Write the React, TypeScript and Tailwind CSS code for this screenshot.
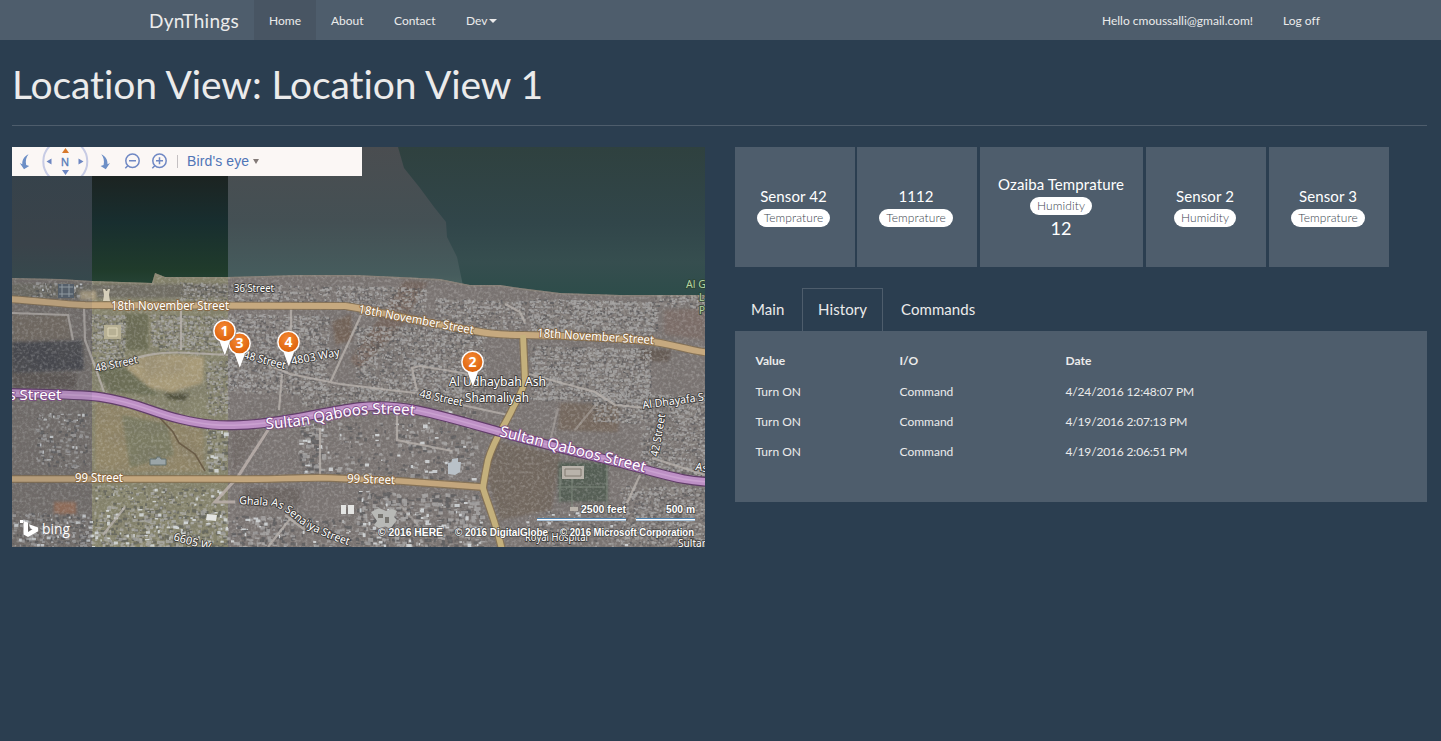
import React from "react";

const FONT = "font-[Lato,sans-serif] [font-variant-ligatures:none]";

/* ---------- Aerial map ---------- */

function createRandom(seed: number) {
  let s = seed;
  return () => {
    s = (s * 1664525 + 1013904223) % 4294967296;
    return s / 4294967296;
  };
}

type Block = [x: number, y: number, w: number, h: number, count: number, size: number];

function specks(blocks: Block[], seed: number) {
  const rnd = createRandom(seed);
  let d = "";
  for (const [x, y, w, h, count, size] of blocks) {
    for (let i = 0; i < count; i++) {
      const px = x + rnd() * w;
      const py = y + Math.floor((rnd() * h) / 5) * 5 + rnd() * 3.8 + (px - x) * 0.03;
      const bw = 1 + rnd() * size;
      const bh = 1 + rnd() * size * 0.7;
      d += `M${px.toFixed(1)} ${py.toFixed(1)}h${bw.toFixed(1)}v${bh.toFixed(1)}h-${bw.toFixed(1)}z`;
    }
  }
  return d;
}

const housing: Block[] = [
  [90, 314, 34, 46, 170, 2],
  [150, 314, 78, 36, 330, 2],
  [180, 282, 150, 20, 230, 2.2],
  [228, 313, 100, 78, 850, 2],
  [335, 285, 90, 23, 220, 2],
  [355, 325, 130, 73, 950, 2],
  [435, 298, 90, 34, 280, 2],
  [528, 298, 128, 32, 650, 2],
  [530, 345, 120, 55, 950, 2],
  [592, 392, 113, 30, 380, 2],
  [640, 425, 65, 48, 300, 2],
  [620, 485, 85, 60, 450, 2],
  [206, 360, 22, 55, 100, 2],
  [300, 385, 100, 22, 150, 2.2],
  [655, 292, 50, 13, 70, 2.2],
];
const industry: Block[] = [
  [36, 412, 50, 55, 80, 3],
  [12, 512, 80, 34, 130, 3],
  [94, 484, 130, 22, 80, 3],
  [94, 506, 134, 40, 270, 3.5],
  [230, 515, 120, 32, 110, 4],
  [298, 422, 25, 50, 50, 4.5],
  [325, 420, 65, 52, 40, 3.5],
  [395, 408, 80, 69, 100, 4],
  [355, 490, 125, 55, 230, 4.5],
  [205, 425, 20, 45, 40, 4],
  [525, 510, 100, 35, 80, 2.5],
  [30, 282, 50, 16, 35, 2.5],
];

const PALE = specks(housing, 11) + specks(industry, 71);
const DARK = specks(housing, 29) + specks(industry, 37);
const WARM = specks(housing, 53);
const BRIGHT = specks(
  industry.map(([x, y, w, h, c, s]) => [x, y, w, h, Math.round(c / 5), s] as Block),
  97,
);

const COAST =
  "M12 278L60 279L92 281L152 283L155 273L165 277L228 277L300 275L355 275L400 277L440 279L470 285L500 285L520 288L560 293L620 295L705 295";

const highwayPath =
  "M8 393C40 394 75 394 100 397C140 403 150 412 180 419C205 425 220 426 240 425C280 424 320 412 360 407C400 403 430 412 500 432C560 449 620 462 650 471C680 479 690 481 710 482";
const northRoad = "M8 299C40 301 60 304 85 305L345 306C362 308 400 318 475 331C490 334 505 335 524 335C570 336 610 337 645 341C670 343 685 350 710 353";
const southRoad = "M8 479L230 479C270 480 300 477 330 478L400 481L482 487";
const linkRoad = "M523 335L525 380C522 395 516 400 511 412C503 428 494 440 488 460C486 470 484 480 483 488C488 505 496 522 502 550";

function MapLabel({
  x, y, size, width, rotate = 0, tone = "dark", children,
}: {
  x: number; y: number; size: number; width: number; rotate?: number;
  tone?: "dark" | "brown" | "purple" | "green"; children: string;
}) {
  const halo = { dark: "#33312f", brown: "#85643d", purple: "#7d4788", green: "#2d4430" }[tone];
  return (
    <text
      x={x}
      y={y}
      transform={`rotate(${rotate} ${x} ${y})`}
      textLength={width}
      lengthAdjust="spacingAndGlyphs"
      fontSize={size}
      fill={tone === "green" ? "#b4d3a2" : "#ffffff"}
      stroke={halo}
      strokeWidth={2}
      strokeOpacity={0.8}
      strokeLinejoin="round"
      paintOrder="stroke"
      className="font-['Noto_Sans',sans-serif]"
    >
      {children}
    </text>
  );
}

function CurvedLabel({ id, d, size, width, tone = "#33312f", children }: { id: string; d: string; size: number; width: number; tone?: string; children: string }) {
  return (
    <>
      <path id={id} d={d} fill="none" />
      <text fontSize={size} fill="#fff" stroke={tone} strokeWidth={2} strokeOpacity={0.8} strokeLinejoin="round" paintOrder="stroke" className="font-['Noto_Sans',sans-serif]">
        <textPath href={`#${id}`} textLength={width} lengthAdjust="spacingAndGlyphs">{children}</textPath>
      </text>
    </>
  );
}

function Marker({ x, y, label }: { x: number; y: number; label: string }) {
  return (
    <g transform={`translate(${x} ${y})`}>
      <path d="M-5.5 9L0.3 25L6 9Z" fill="#fff" stroke="#6d625a" strokeWidth={0.5} />
      <circle r={11.8} fill="#fff" stroke="#6d625a" strokeWidth={0.6} />
      <circle r={9.9} fill="url(#pin)" />
      <path d="M-4.8 10L0.3 23.5L5.4 10Z" fill="#fff" />
      <text y={4.8} textAnchor="middle" fontSize={14} fontWeight={700} fill="#fff" className="font-['Open_Sans',sans-serif]">{label}</text>
    </g>
  );
}

function AerialMap() {
  return (
    <svg viewBox="12 147 693 400" width={693} height={400} className="block">
      <defs>
        <linearGradient id="seaLeft" x1="0" y1="0" x2="0" y2="1">
          <stop offset="0" stopColor="#35424b" /><stop offset="0.65" stopColor="#3a434a" /><stop offset="1" stopColor="#344b4e" />
        </linearGradient>
        <linearGradient id="seaMid" x1="0" y1="0" x2="0" y2="1">
          <stop offset="0" stopColor="#1c2422" /><stop offset="0.2" stopColor="#1c2422" /><stop offset="0.5" stopColor="#182e2f" /><stop offset="0.82" stopColor="#203b2b" /><stop offset="1" stopColor="#2a4a3e" />
        </linearGradient>
        <linearGradient id="seaHaze" x1="0" y1="0" x2="0" y2="1">
          <stop offset="0" stopColor="#4a4d50" /><stop offset="0.5" stopColor="#445054" /><stop offset="0.85" stopColor="#465c5d" /><stop offset="1" stopColor="#516863" />
        </linearGradient>
        <linearGradient id="seaDeep" x1="0" y1="0" x2="0" y2="1">
          <stop offset="0" stopColor="#2f413f" /><stop offset="0.5" stopColor="#31464a" /><stop offset="0.75" stopColor="#364e4f" /><stop offset="1" stopColor="#2c4c49" />
        </linearGradient>
        <radialGradient id="pin" cx="0.45" cy="0.35" r="0.75">
          <stop offset="0" stopColor="#f58a35" /><stop offset="1" stopColor="#d95c05" />
        </radialGradient>
        <filter id="soil" x="0" y="0" width="100%" height="100%">
          <feTurbulence type="fractalNoise" baseFrequency="0.035 0.045" numOctaves={5} seed={8} />
          <feColorMatrix values="0 0 0 0 0.15  0 0 0 0 0.14  0 0 0 0 0.13  1.8 0 0 0 -0.7" />
        </filter>
        <filter id="grain" x="0" y="0" width="100%" height="100%">
          <feTurbulence type="fractalNoise" baseFrequency="0.35" numOctaves={2} seed={4} />
          <feColorMatrix values="0 0 0 0 0.84  0 0 0 0 0.84  0 0 0 0 0.83  0 1.5 0 0 -0.64" />
        </filter>
        <clipPath id="land"><path d={`${COAST}V547H12Z`} /></clipPath>
        <filter id="soft"><feGaussianBlur stdDeviation="0.45" /></filter>
        <filter id="blend"><feGaussianBlur stdDeviation="1.8" /></filter>
      </defs>

      {/* water */}
      <rect x={12} y={147} width={80} height={150} fill="url(#seaLeft)" />
      <rect x={92} y={147} width={136} height={150} fill="url(#seaMid)" />
      <rect x={228} y={147} width={477} height={150} fill="url(#seaHaze)" />
      <path d="M398 147L404 168L420 188L434 207L446 222L447 237L457 257L466 300H705V147Z" fill="url(#seaDeep)" />

      {/* land */}
      <g clipPath="url(#land)">
        <rect x={12} y={270} width={80} height={277} fill="#76706b" />
        <rect x={92} y={270} width={136} height={277} fill="#86846c" />
        <rect x={228} y={270} width={477} height={277} fill="#7b7573" />
        <g filter="url(#blend)">
          <path d="M12 342L82 340L84 370L12 373Z" fill="#494a4e" />
          <path d="M12 315L68 314L72 340L12 341Z" fill="#746c62" />
          <path d="M12 373H76V388H12Z" fill="#5e5953" />
          <path d="M124 314H148V350H126Z" fill="#6c6d55" />
          <path d="M122 362C140 353 180 353 204 357L203 383L172 392L142 386Z" fill="#a79a78" />
          <path d="M95 402L150 410L204 430V472H95Z" fill="#918668" />
          <path d="M122 415L168 424L174 455L130 468Z" fill="#7c7c63" />
          <path d="M94 370L125 367L160 396L110 392Z" fill="#6c6e57" />
          <path d="M332 322L351 314L352 340L336 345Z" fill="#736359" />
          <path d="M405 280L428 282L400 328L360 370L350 360Z" fill="#75665f" />
          <path d="M232 430L264 430L235 472H232Z" fill="#736c69" />
          <path d="M245 488H300V506L245 500Z" fill="#6d6664" />
          <path d="M492 440L560 455L552 510L500 520L488 480Z" fill="#72675f" />
          <path d="M560 403L620 405L618 432L558 430Z" fill="#76695e" />
          <path d="M558 462H608V502H558Z" fill="#545e55" />
          <path d="M664 310L705 308V340L664 335Z" fill="#7b6e69" />
          <path d="M640 348L672 350L668 362L640 360Z" fill="#665b54" />
          <path d="M54 502H76V514H54Z" fill="#97705a" />
          <path d="M164 393L190 394L184 401L168 399Z" fill="#504f3a" />
          <path d="M12 284H228V298H12Z" fill="#706d63" />
          <path d="M80 291H96V300H80Z" fill="#a99c80" />
        </g>
        <rect x={12} y={270} width={693} height={277} filter="url(#soil)" opacity={0.22} />
        <rect x={12} y={270} width={693} height={277} filter="url(#grain)" opacity={0.4} />
        <g filter="url(#soft)">
          <path d={DARK} fill="#484a4d" opacity={0.45} />
          <path d={WARM} fill="#928d88" opacity={0.6} />
          <path d={PALE} fill="#b4b5b5" opacity={0.62} />
          <path d={BRIGHT} fill="#dde2e5" opacity={0.8} />
          <rect x={104} y={325} width={17} height={14} fill="#b7b094" />
          <path d="M108 328h9v8h-9z" fill="none" stroke="#ded6b9" />
          <rect x={58} y={284} width={16} height={14} fill="#59636c" />
          <path d="M59 287h14M59 294h14M62 284v13M69 284v13" stroke="#9ba5aa" fill="none" />
          <path d="M103 289h2l1 2h1l1-2h2l-1 6 1 6h-7l1-6z" fill="#d6cfba" />
          <path d="M150 459h6l1-2h3l1 2h5v6h-16z" fill="#9ba5a8" stroke="#65706e" />
          <path d="M562 466h22v13h-22z" fill="#b9b3ab" />
          <path d="M565 469h16v7h-16z" fill="none" stroke="#817a70" />
          <path d="M572 479V508M558 487H605M607 465V515M560 470V502" stroke="#7d867b" fill="none" />
          <path d="M570 507h8v4h-8z" fill="#b9b3ab" />
          <path d="M448 463l4-1v-3l6-1v4h3l-1 10-5 3-7-1z" fill="#b9c1c8" />
          <path d="M371 512l8-4 7 3 6-2 5 2-3 6 3 3-7 9-5-3-5 3-6-4 3-4z" fill="#b8b9b6" />
          <path d="M378 514h5v4h-5zM385 517h4v6h-4z" fill="#77746f" />
          <path d="M207 514l10 1-1 6-10-1zM341 505h5v9h-5zM348 505h6v9h-6z" fill="#e4e5e3" />
        </g>
        {/* shoreline and local streets */}
        <path d={COAST} fill="none" stroke="#948b7d" strokeWidth={3} opacity={0.5} />
        <g fill="none" stroke="#b8b2ad" strokeWidth={2.2} opacity={0.8}>
          <path d="M84 306L85 340L97 372L104 392M12 313L68 315L73 340M96 370C130 360 150 350 190 353L228 355M181 308V350" />
          <path d="M291 307V345M282 374L279 410M262 362L290 374L340 384L415 393M361 315L330 383" />
          <path d="M125 507L103 535M293 515L268 547M285 515L305 530" />
          <path d="M417 391L412 368L420 366L475 375M425 397L508 415M529 374L595 392L615 405L645 408M525 323L520 312L505 304" />
          <path d="M397 412V440L452 451M652 458L705 475M320 428V476M640 475L627 503" />
          <path d="M558 408L548 450M598 402L575 430M400 505L425 533" opacity={0.6} />
        </g>
        <path d="M268 430L237 478L215 502H235" fill="none" stroke="#bbb0ac" strokeWidth={3} opacity={0.85} />
        <path d="M160 418L173 432L179 443L195 454L205 471" fill="none" stroke="#6b5d48" strokeWidth={1.6} />

        {/* main roads */}
        <g fill="none" strokeLinejoin="round">
          <g stroke="#86704f" strokeWidth={8} opacity={0.8}><path d={northRoad} /><path d={southRoad} /><path d={linkRoad} /></g>
          <path d={northRoad} stroke="#c6a97f" strokeWidth={6} />
          <path d={southRoad} stroke="#c3a67d" strokeWidth={5.6} />
          <path d={linkRoad} stroke="#c4b07c" strokeWidth={5.8} />
          <path d={highwayPath} stroke="#613d69" strokeWidth={10} />
          <path d={highwayPath} stroke="#bd90c5" strokeWidth={7.6} />
          <path d={highwayPath} stroke="#caa1d0" strokeWidth={1.6} />
        </g>
        <rect x={12} y={270} width={80} height={277} fill="#3c4656" opacity={0.1} />
      </g>

      {/* labels */}
      <MapLabel x={234} y={292} size={10.5} width={40}>36 Street</MapLabel>
      <MapLabel x={111} y={309.5} size={12} width={118} tone="brown">18th November Street</MapLabel>
      <MapLabel x={358} y={313} size={12} width={117} rotate={10.5} tone="brown">18th November Street</MapLabel>
      <MapLabel x={537} y={337} size={12} width={117} rotate={3.5} tone="brown">18th November Street</MapLabel>
      <MapLabel x={96} y={372} size={11} width={43} rotate={-12}>48 Street</MapLabel>
      <MapLabel x={243} y={358} size={11} width={43} rotate={15}>48 Street</MapLabel>
      <MapLabel x={292} y={365} size={11} width={49} rotate={-11}>4803 Way</MapLabel>
      <MapLabel x={419} y={397} size={11} width={44} rotate={12}>48 Street</MapLabel>
      <MapLabel x={8.5} y={400} size={15} width={53} tone="purple">s Street</MapLabel>
      <CurvedLabel id="qaboosWest" d="M266 429Q300 427 330 420Q370 410 418 416" size={15} width={150} tone="#7d4788">Sultan Qaboos Street</CurvedLabel>
      <MapLabel x={499} y={436} size={15} width={150} rotate={14} tone="purple">Sultan Qaboos Street</MapLabel>
      <MapLabel x={75} y={482} size={12} width={48} tone="brown">99 Street</MapLabel>
      <MapLabel x={347} y={482.5} size={12} width={48} rotate={2} tone="brown">99 Street</MapLabel>
      <CurvedLabel id="ghala" d="M239 504L273 506Q282 508 295 519Q310 533 356 548" size={11} width={120}>Ghala As Sena'iya Street</CurvedLabel>
      <MapLabel x={173} y={540} size={11} width={38} rotate={16}>6605 W</MapLabel>
      <MapLabel x={643} y={409} size={11} width={62} rotate={-8}>Al Dhayafa S</MapLabel>
      <MapLabel x={658} y={457} size={11} width={43} rotate={-80}>42 Street</MapLabel>
      <MapLabel x={695} y={470} size={11} width={12} rotate={10}>As</MapLabel>
      <MapLabel x={686} y={288} size={11} width={20} tone="green">Al G</MapLabel>
      <MapLabel x={699} y={301} size={11} width={11} tone="green">La</MapLabel>
      <MapLabel x={699} y={314} size={11} width={6} tone="green">P</MapLabel>
      <MapLabel x={525} y={541} size={10.5} width={63}>Royal Hospital</MapLabel>
      <MapLabel x={678} y={547} size={11} width={30}>Sultan</MapLabel>
      <Marker x={239.5} y={343.5} label="3" />
      <Marker x={224.5} y={331} label="1" />
      <Marker x={288.5} y={342} label="4" />
      <MapLabel x={449} y={386} size={12} width={97}>Al Udhaybah Ash</MapLabel>
      <MapLabel x={465} y={402} size={12} width={64}>Shamaliyah</MapLabel>
      <Marker x={472.5} y={362} label="2" />

      {/* provider mark */}
      <path d="M23.5 521L28 522.6V532L32.5 529.3L30.6 528.4L29 524.2L38.2 527.4V531.2L28 537L23.5 534.5Z" fill="#fff" />
      <rect x={20} y={520} width={3} height={3} fill="#fff" />
      <text x={42} y={534} fontSize={14.5} textLength={28} lengthAdjust="spacingAndGlyphs" fill="#fff" className="font-['Open_Sans',sans-serif]">bing</text>

      {/* scale and credits */}
      <g fill="#fff" stroke="#3d3d3d" strokeOpacity={0.75} strokeWidth={1.6} paintOrder="stroke" fontSize={10} fontWeight={700} className="font-['Liberation_Sans',sans-serif]">
        <text x={581} y={513} textLength={45} lengthAdjust="spacingAndGlyphs">2500 feet</text>
        <text x={666} y={513} textLength={29} lengthAdjust="spacingAndGlyphs">500 m</text>
        <text x={378} y={536} textLength={65} lengthAdjust="spacingAndGlyphs">© 2016 HERE</text>
        <text x={455} y={536} textLength={93} lengthAdjust="spacingAndGlyphs">© 2016 DigitalGlobe</text>
        <text x={560} y={536} textLength={134} lengthAdjust="spacingAndGlyphs">© 2016 Microsoft Corporation</text>
      </g>
      <path d="M537 518h89v3h-89zM636 518h59v3h-59z" fill="#4f83b0" />
      <path d="M537 519h89v1.4h-89zM636 519h59v1.4h-59z" fill="#fff" />
    </svg>
  );
}

function MapToolbar() {
  return (
    <div className="absolute top-0 left-0 flex h-[29px] w-[350px] items-center bg-[#fbf7f5]">
      <svg width={175} height={29} viewBox="0 0 175 29" className="block shrink-0" fill="none">
        <circle cx={53.3} cy={14.5} r={22} stroke="#c7cbe4" strokeWidth={2} />
        <path d="M16.5 7.3C12.5 9 10 13 10.3 17.2L7.8 16L12 22.2L17.2 19L14.2 18C13.2 14 14.3 10 16.5 7.3Z" fill="#6d8fc6" />
        <path d="M89.3 7.3C93.3 9 95.8 13 95.5 17.2L98 16L93.8 22.2L88.6 19L91.6 18C92.6 14 91.5 10 89.3 7.3Z" fill="#6d8fc6" />
        <path d="M53.5 1L57 6H50Z" fill="#d8792b" />
        <path d="M53.5 28L57 23H50ZM34.5 14.5L39.5 11.5V17.5ZM71.5 14.5L66.5 11.5V17.5Z" fill="#6d86c1" />
        <text x={53} y={19} textAnchor="middle" fontSize={11} fill="#557bb8" stroke="#557bb8" strokeWidth={0.3} className="font-['Liberation_Sans',sans-serif]">N</text>
        <g stroke="#6f88c4" strokeWidth={1.5}>
          <circle cx={120.5} cy={13.7} r={6.7} /><path d="M116 18.5L113.3 21.2M117 13.7H124" />
          <circle cx={147.5} cy={13.7} r={6.7} /><path d="M143 18.5L140.3 21.2M144 13.7H151M147.5 10.2V17.2" />
        </g>
        <path d="M165.5 8V21" stroke="#c4c0c2" />
      </svg>
      <span className="pb-px font-['Liberation_Sans',sans-serif] text-[14px] leading-none tracking-[0.12px] text-[#5075b7]">Bird's eye</span>
      <span className="ml-1 h-0 w-0 border-x-[3px] border-t-[5px] border-x-transparent border-t-[#827a78]" />
    </div>
  );
}

/* ---------- Page ---------- */

const sensors = [
  { name: "Sensor 42", kind: "Temprature", box: "w-[120px] pr-[3px]" },
  { name: "1112", kind: "Temprature", box: "ml-0.5 w-[120px] pr-[2px]" },
  { name: "Ozaiba Temprature", kind: "Humidity", value: "12", box: "ml-[3px] w-[163px] pr-px" },
  { name: "Sensor 2", kind: "Humidity", box: "ml-[3px] w-[120px] pr-[2px]" },
  { name: "Sensor 3", kind: "Temprature", box: "ml-[3px] w-[120px] pr-[2px]" },
];

const history = [
  ["Turn ON", "Command", "4/24/2016 12:48:07 PM"],
  ["Turn ON", "Command", "4/19/2016 2:07:13 PM"],
  ["Turn ON", "Command", "4/19/2016 2:06:51 PM"],
];

export default function App() {
  return (
    <div className={`h-[741px] w-[1441px] overflow-hidden bg-[#2b3e50] text-[12px] text-[#ebebeb] ${FONT}`}>
      <nav className="flex h-10 items-center bg-[#4e5d6c] pl-[149px]">
        <a className="w-[105px] pt-0.5 text-[19px] leading-[38px] tracking-[0.3px]">DynThings</a>
        <a className="w-[62px] bg-[#485563] pt-0.5 pl-[15px] leading-[38px]">Home</a>
        <a className="w-[62px] pt-0.5 pl-[15px] leading-[38px]">About</a>
        <a className="w-[73px] pt-0.5 pl-4 leading-[38px]">Contact</a>
        <a className="flex items-center pt-0.5 pl-[15px] leading-[38px]">
          Dev
          <span className="ml-0.5 h-0 w-0 border-x-4 border-t-4 border-x-transparent border-t-[#ebebeb]" />
        </a>
        <a className="ml-auto pt-0.5 leading-[38px]">Hello cmoussalli@gmail.com!</a>
        <a className="ml-[30px] w-[158px] pt-0.5 leading-[38px]">Log off</a>
      </nav>

      <header className="mr-[14px] ml-3 h-[86px] border-b border-[#4e5d6c] pt-[21px]">
        <h1 className="text-[39px] leading-[46px] tracking-[-0.09px]">Location View: Location View 1</h1>
      </header>

      <main className="mt-[21px] mr-[14px] ml-3 flex gap-[30px]">
        <section className="relative h-[400px] w-[693px] shrink-0 overflow-hidden">
          <AerialMap />
          <MapToolbar />
        </section>

        <section className="w-[692px]">
          <div className="flex h-[120px]">
            {sensors.map((s) => (
              <div key={s.name} className={`flex shrink-0 flex-col items-center justify-center bg-[#4e5d6c] pb-px text-white ${s.box}`}>
                <span className="-mt-px text-[15px] leading-[22px] tracking-[0.1px]">{s.name}</span>
                <span className="mt-0.5 flex h-[18px] items-center rounded-full bg-white px-[7px] text-[12px] font-light tracking-[0.1px] text-[#3c4650]">{s.kind}</span>
                {s.value && <span className="mt-0.5 text-[18px] leading-[22px]">{s.value}</span>}
              </div>
            ))}
          </div>

          <div className="mt-[21px] flex h-[43px] text-[15px] leading-[43px]">
            <span className="w-[67px] pl-4 tracking-[0.06px]">Main</span>
            <span className="w-[81px] border border-b-0 border-[#4e5d6c] pl-[15px] leading-[41px] tracking-[0.1px]">History</span>
            <span className="pl-[18px] tracking-[0.06px]">Commands</span>
          </div>
          <div className="h-[171px] bg-[#4e5d6c] pt-[15px] pl-[20.5px]">
            <div className="grid h-[30px] grid-cols-[144px_166px_1fr] items-center font-bold">
              <span>Value</span><span>I/O</span><span>Date</span>
            </div>
            <div className="h-px" />
            {history.map((row) => (
              <div key={row[2]} className="grid h-[30px] grid-cols-[144px_166px_1fr] items-center">
                <span>{row[0]}</span>
                <span>{row[1]}</span>
                <span className="tracking-[-0.16px]">{row[2]}</span>
              </div>
            ))}
          </div>
        </section>
      </main>
    </div>
  );
}
